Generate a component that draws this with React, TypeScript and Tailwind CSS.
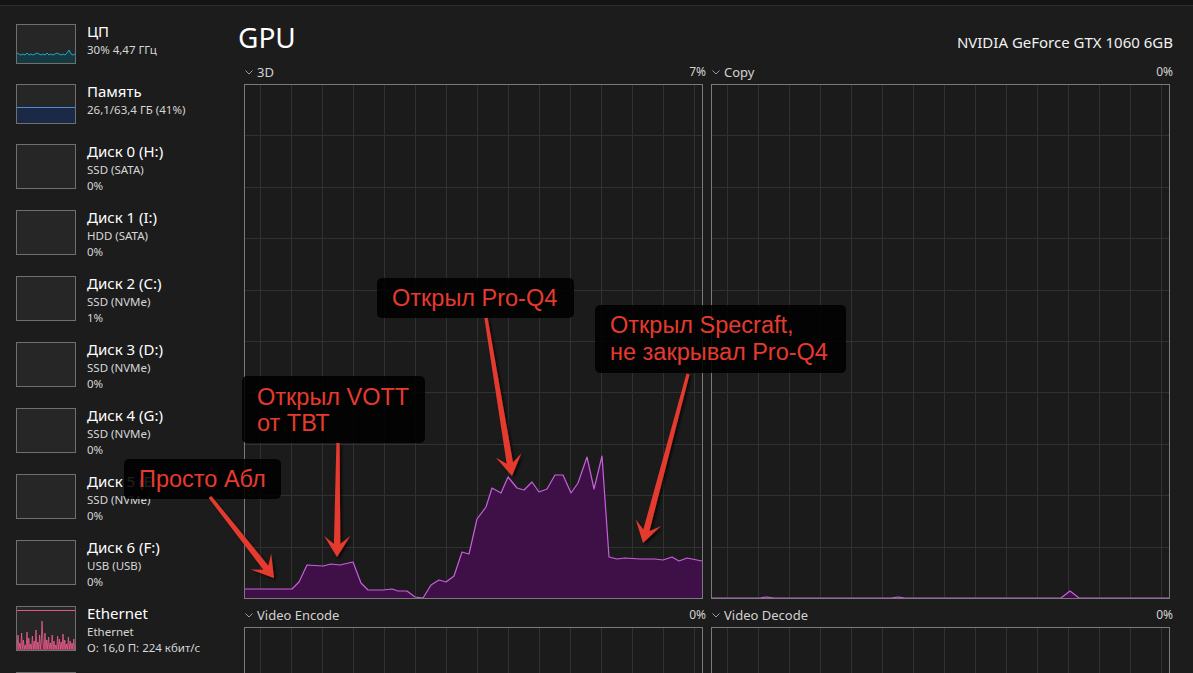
import React from 'react';

// Sidebar entries for the performance tab
const disks = [
  { name: 'Диск 0 (H:)', type: 'SSD (SATA)', load: '0%' },
  { name: 'Диск 1 (I:)', type: 'HDD (SATA)', load: '0%' },
  { name: 'Диск 2 (C:)', type: 'SSD (NVMe)', load: '1%' },
  { name: 'Диск 3 (D:)', type: 'SSD (NVMe)', load: '0%' },
  { name: 'Диск 4 (G:)', type: 'SSD (NVMe)', load: '0%' },
  { name: 'Диск 5 (E:)', type: 'SSD (NVMe)', load: '0%' },
  { name: 'Диск 6 (F:)', type: 'USB (USB)', load: '0%' },
];

// 3D engine history, in page coordinates
const load3d: [number, number][] = [
  [244, 589], [292, 589], [299, 582], [307, 565], [323, 566], [331, 564], [340, 565],
  [353, 562], [361, 583], [368, 590], [383, 590], [392, 589], [398, 591], [407, 591],
  [415, 597], [423, 598], [431, 585], [439, 580], [446, 582], [454, 576], [462, 552],
  [469, 554], [477, 519], [486, 507], [492, 488], [501, 493], [508, 477], [517, 488],
  [524, 490], [532, 482], [539, 492], [547, 489], [555, 475], [563, 475], [571, 493],
  [578, 483], [587, 457], [594, 489], [602, 456], [609, 557], [617, 559], [625, 558],
  [640, 559], [655, 559], [663, 560], [672, 557], [679, 561], [687, 558], [702, 561],
];

const copyLoad: [number, number][] = [
  [712, 598], [760, 598], [767, 597], [774, 598], [891, 598], [898, 597], [905, 598],
  [1061, 598], [1070, 591], [1079, 598], [1170, 598],
];

const ethSpikes = [
  30, 14, 34, 20, 10, 36, 24, 12, 28, 18, 40, 16, 30, 22, 12, 34, 20, 26, 14, 30,
  18, 10, 28, 22, 16, 32, 20, 12, 26, 18, 14, 22,
];

const arrows = [
  { t: [210, 497], p: [274, 578] },
  { t: [338, 443], p: [337, 557] },
  { t: [486, 318], p: [512, 476] },
  { t: [688, 374], p: [643, 543] },
];

function arrowPath(t: number[], p: number[]) {
  const dx = p[0] - t[0];
  const dy = p[1] - t[1];
  const len = Math.hypot(dx, dy);
  const ux = dx / len;
  const uy = dy / len;
  const nx = -uy;
  const ny = ux;
  const headLen = 21;
  const headHalf = 13;
  const notch = headLen * 0.62;
  const bx = p[0] - ux * notch;
  const by = p[1] - uy * notch;
  const wx = p[0] - ux * headLen;
  const wy = p[1] - uy * headLen;
  const pts = [
    [t[0] + nx * 1.6, t[1] + ny * 1.6],
    [bx + nx * 3.2, by + ny * 3.2],
    [wx + nx * headHalf, wy + ny * headHalf],
    [p[0], p[1]],
    [wx - nx * headHalf, wy - ny * headHalf],
    [bx - nx * 3.2, by - ny * 3.2],
    [t[0] - nx * 1.6, t[1] - ny * 1.6],
  ];
  return 'M' + pts.map((q) => `${q[0].toFixed(1)} ${q[1].toFixed(1)}`).join(' L') + ' Z';
}

function CpuThumb() {
  const pts: string[] = [];
  for (let x = 0; x <= 58; x += 2) {
    const y = x === 52 ? 25 : 29 + ((x * 7) % 5 === 0 ? -1 : (x * 3) % 4 === 0 ? 1 : 0);
    pts.push(`${x},${y}`);
  }
  return (
    <svg width="58" height="38" className="block">
      <polygon points={`0,38 ${pts.join(' ')} 58,38`} fill="#16393f" />
      <polyline points={pts.join(' ')} fill="none" stroke="#1ca6d2" strokeWidth="1" />
    </svg>
  );
}

function MemThumb() {
  return (
    <svg width="58" height="38" className="block">
      <rect x="0" y="22.5" width="58" height="16" fill="#1a2945" />
      <line x1="0" y1="22.5" x2="58" y2="22.5" stroke="#4c8ad8" strokeWidth="1" />
    </svg>
  );
}

function EthThumb() {
  const pts: string[] = ['0,43'];
  ethSpikes.forEach((h, i) => {
    const x = 1 + i * 1.8;
    pts.push(`${x.toFixed(1)},${43 - h * 0.5}`);
    pts.push(`${(x + 0.9).toFixed(1)},42`);
  });
  // tallest spike near the middle
  pts.splice(28, 1, '25,14');
  pts.push('58,42', '58,43');
  return (
    <svg width="58" height="43" className="block">
      <line x1="0" y1="3.5" x2="58" y2="3.5" stroke="#e0577f" strokeWidth="1" />
      <polygon points={pts.join(' ')} fill="#6a2a44" stroke="#e8608b" strokeWidth="0.8" />
    </svg>
  );
}

function SideItem({
  title,
  lines = [],
  tall,
  thumb,
}: {
  title?: string;
  lines?: string[];
  tall?: boolean;
  thumb?: React.ReactNode;
}) {
  return (
    <div className={`flex gap-[11px] ${tall ? 'h-[66px]' : 'h-[60px]'}`}>
      <div
        className={`w-[60px] shrink-0 border border-[#6f6f6f] bg-[#262626] ${tall ? 'h-[45px]' : 'h-[40px]'}`}
      >
        {thumb}
      </div>
      {title && (
        <div className="-mt-[3px] flex flex-col">
          <span className="text-[15px] leading-[21px] text-white">{title}</span>
          {lines.map((l) => (
            <span key={l} className="text-[11.5px] leading-[16px] text-[#d6d6d6] whitespace-nowrap">
              {l}
            </span>
          ))}
        </div>
      )}
    </div>
  );
}

function Chevron() {
  return (
    <svg width="8" height="5" viewBox="0 0 8 5" className="shrink-0">
      <path d="M0.5 0.5 L4 4 L7.5 0.5" fill="none" stroke="#9a9a9a" strokeWidth="1" />
    </svg>
  );
}

function ChartLabel({ name, value }: { name: string; value: string }) {
  return (
    <div className="flex h-[16px] items-center justify-between pl-[1px] text-[13px] leading-[16px] text-[#d2d2d2]">
      <div className="flex items-center gap-[4px]">
        <Chevron />
        <span>{name}</span>
      </div>
      <span className="text-[12px]">{value}</span>
    </div>
  );
}

function Chart({ ox, oy, data }: { ox: number; oy: number; data?: [number, number][] }) {
  const cols = Array.from({ length: 15 }, (_, k) => 15 + 31 * k);
  const rows = Array.from({ length: 9 }, (_, k) => -1 + 51.4 * (k + 1));
  const pts = data ? data.map((d) => `${d[0]},${d[1]}`).join(' ') : '';
  return (
    <div className="h-[515px] w-[459px] overflow-hidden border border-[#7a7a7a] bg-[#1b1b1b]">
      <svg width="457" height="513" className="block">
        {cols.map((x) => (
          <line key={`c${x}`} x1={x + 0.5} y1="0" x2={x + 0.5} y2="513" stroke="#313131" strokeWidth="1" />
        ))}
        {rows.map((y) => (
          <line key={`r${y}`} x1="0" y1={Math.round(y) + 0.5} x2="457" y2={Math.round(y) + 0.5} stroke="#313131" strokeWidth="1" />
        ))}
        {data && (
          <g transform={`translate(${-ox} ${-oy})`}>
            <polygon points={`${data[0][0]},600 ${pts} ${data[data.length - 1][0]},600`} fill="#3f1047" />
            <polyline points={pts} fill="none" stroke="#c760db" strokeWidth="1.2" strokeLinejoin="round" />
          </g>
        )}
      </svg>
    </div>
  );
}

function Note({
  className,
  children,
}: {
  className: string;
  children: React.ReactNode;
}) {
  return (
    <div
      className={`absolute rounded-[5px] bg-black/[0.88] pl-[15px] font-['Liberation_Sans',Arial,sans-serif] text-[23.5px] whitespace-nowrap text-[#e63a2e] ${className}`}
    >
      {children}
    </div>
  );
}

export default function App() {
  return (
    <div className="relative h-[673px] w-[1193px] overflow-hidden bg-[#1c1c1c] font-['Noto_Sans','Segoe_UI',sans-serif]">
      <div className="h-[6px] border-b border-[#2c2c31] bg-[#141414]" />

      <div className="flex">
        <aside className="w-[238px] shrink-0 pl-[16px] pt-[18px]">
          <SideItem title="ЦП" lines={['30%  4,47 ГГц']} thumb={<CpuThumb />} />
          <SideItem title="Память" lines={['26,1/63,4 ГБ (41%)']} thumb={<MemThumb />} />
          {disks.map((d) => (
            <SideItem key={d.name} title={d.name} lines={[d.type, d.load]} tall />
          ))}
          <SideItem
            title="Ethernet"
            lines={['Ethernet', 'О: 16,0 П: 224 кбит/с']}
            tall
            thumb={<EthThumb />}
          />
          <SideItem tall />
        </aside>

        <main className="flex-1 pr-[20px] pt-[14px]">
          <div className="mb-[10px] flex items-baseline justify-between">
            <h1 className="text-[28px] leading-[34px] text-white">GPU</h1>
            <span className="text-[15px] text-[#f2f2f2]">NVIDIA GeForce GTX 1060 6GB</span>
          </div>

          <div className="ml-[6px] grid grid-cols-[462px_462px] gap-x-[5px]">
            <div className="flex flex-col gap-[4px]">
              <ChartLabel name="3D" value="7%" />
              <Chart ox={245} oy={85} data={load3d} />
            </div>
            <div className="flex flex-col gap-[4px]">
              <ChartLabel name="Copy" value="0%" />
              <Chart ox={712} oy={85} data={copyLoad} />
            </div>
            <div className="mt-[8px] flex flex-col gap-[4px]">
              <ChartLabel name="Video Encode" value="0%" />
              <Chart ox={245} oy={628} />
            </div>
            <div className="mt-[8px] flex flex-col gap-[4px]">
              <ChartLabel name="Video Decode" value="0%" />
              <Chart ox={712} oy={628} />
            </div>
          </div>
        </main>
      </div>

      {/* callouts */}
      <Note className="left-[377px] top-[278px] h-[40px] w-[197px] leading-[40px]">Открыл Pro-Q4</Note>
      <Note className="left-[595px] top-[305px] h-[68px] w-[251px] pt-[7px] leading-[27px]">
        Открыл Specraft,
        <br />
        не закрывал Pro-Q4
      </Note>
      <Note className="left-[242px] top-[376px] h-[67px] w-[183px] pt-[8px] leading-[26px]">
        Открыл VOTT
        <br />
        от ТВТ
      </Note>
      <Note className="left-[124px] top-[459px] h-[40px] w-[157px] leading-[40px]">Просто Абл</Note>

      <svg className="pointer-events-none absolute left-0 top-0" width="1193" height="673">
        <defs>
          <filter id="arrowShadow" x="-20%" y="-20%" width="140%" height="140%">
            <feDropShadow dx="2" dy="2" stdDeviation="1.5" floodColor="#000" floodOpacity="0.7" />
          </filter>
        </defs>
        {arrows.map((a, i) => (
          <path key={i} d={arrowPath(a.t, a.p)} fill="#e53b2f" filter="url(#arrowShadow)" />
        ))}
      </svg>
    </div>
  );
}
